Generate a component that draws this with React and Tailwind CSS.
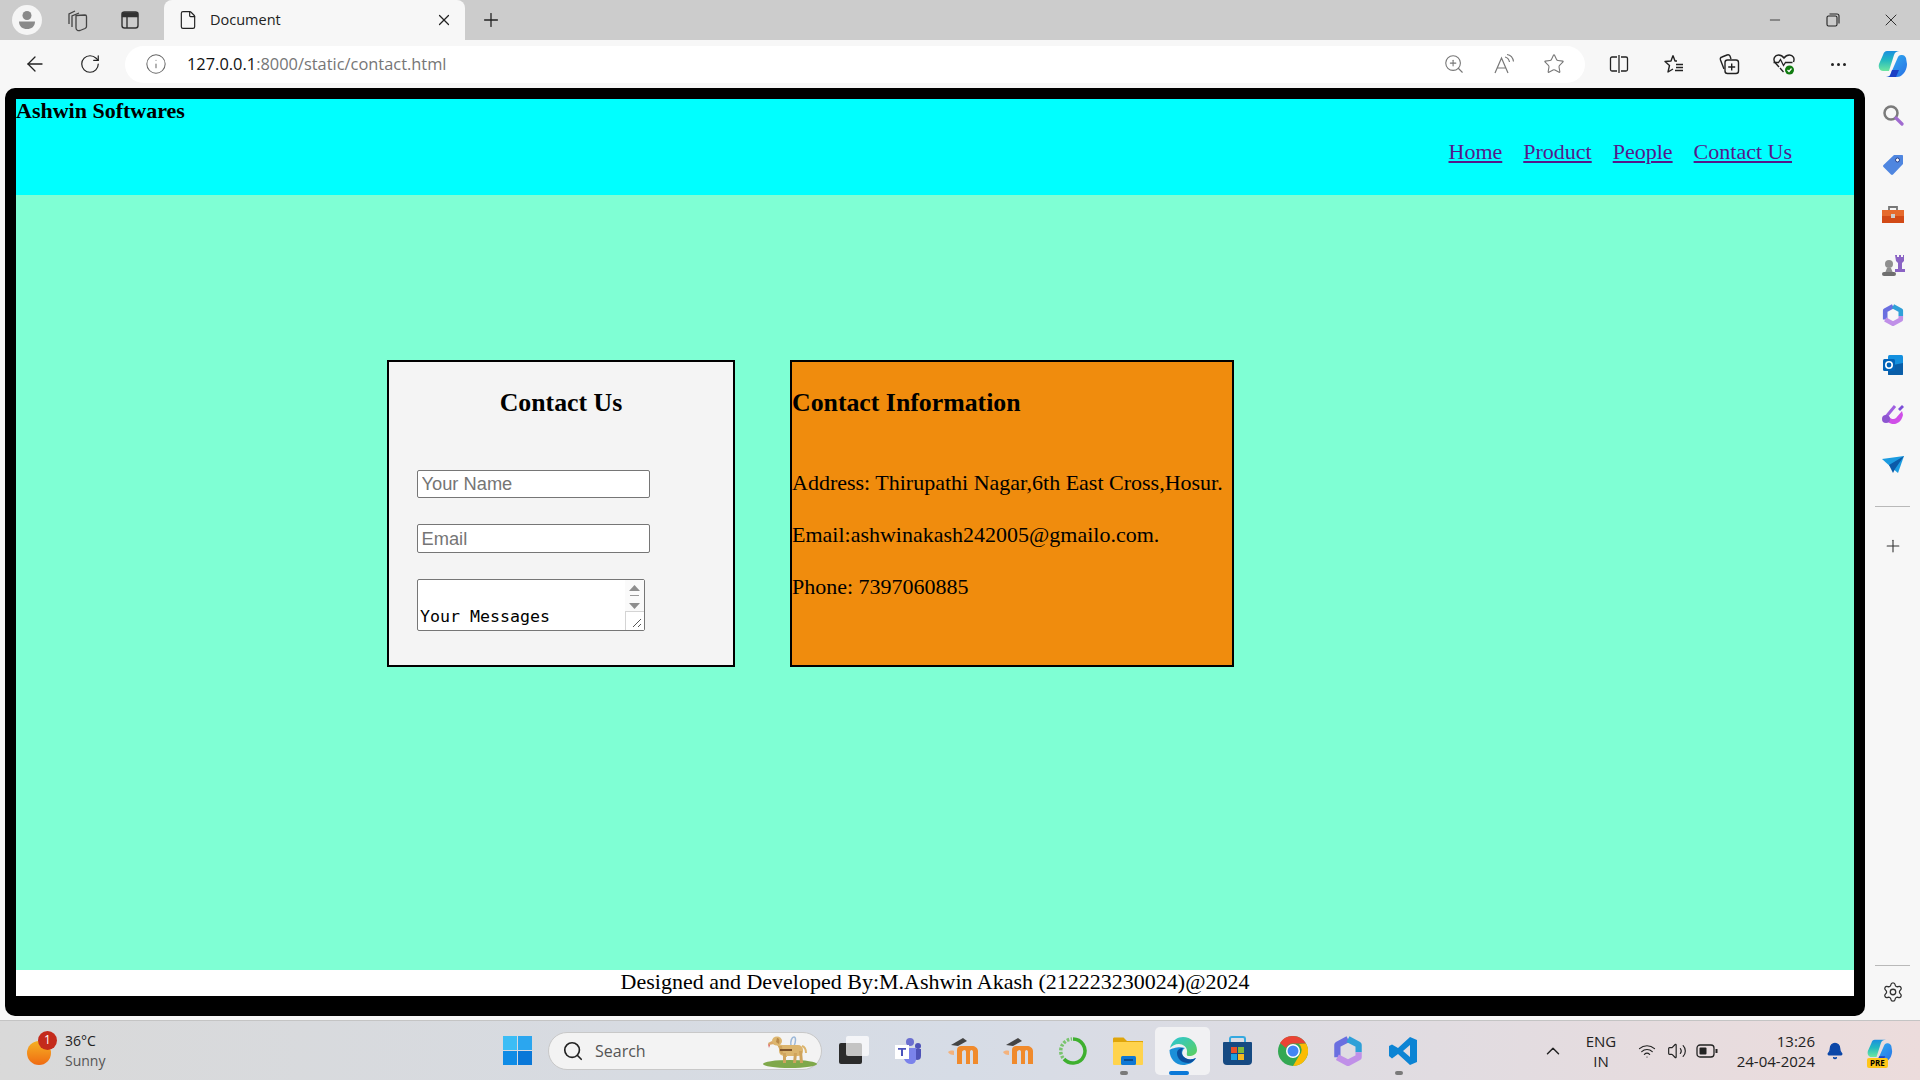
import React from 'react';
import { ArrowLeft, Bell, ChevronUp, File, Info, Minus, Plus, RotateCw, Search, Settings, Star, Volume2, Wifi, X, ZoomIn } from 'lucide-react';

const ui = "font-['Open_Sans','Noto_Sans',sans-serif]";

function Slot({ w, children }) {
  return <div className={`flex shrink-0 items-center justify-center ${w}`}>{children}</div>;
}

function Profile() {
  return (
    <svg width="30" height="30" viewBox="0 0 30 30">
      <circle cx="15" cy="15" r="15" fill="#f5f5f5" />
      <circle cx="15" cy="10.5" r="4.5" fill="#8a8a8a" />
      <path d="M7 16.5h16c0 5-3.5 7.5-8 7.5s-8-2.500-8-7.500z" fill="#8a8a8a" />
    </svg>
  );
}

function TabsIcon() {
  return (
    <svg width="22" height="24" viewBox="0 0 22 24" fill="none" stroke="#444" strokeWidth="1.3">
      <path d="M3 16V6l6-3" />
      <path d="M6 19V8l7-3" />
      <path d="M10 7.500l9-.5c1 0 1.500.5 1.500 1.500v10c0 1-.5 1.500-1.500 2l-5 2c-2 .5-4-.5-4-2.500z" />
    </svg>
  );
}

function VerticalTabs() {
  return (
    <svg width="20" height="20" viewBox="0 0 20 20" fill="none" stroke="#333" strokeWidth="1.4">
      <rect x="2" y="2" width="16" height="16" rx="2.500" />
      <path d="M2.500 3h15v3.500h-15z" fill="#333" />
      <path d="M7 6v12" />
    </svg>
  );
}

function ReadAloud() {
  return (
    <svg width="22" height="22" viewBox="0 0 22 22" fill="none" stroke="#777" strokeWidth="1.2">
      <path d="M2 20 8.500 5 15 20M4.500 15h8" />
      <path d="M12 4c2.500.5 4 2.500 4.500 5M14 1.500c3.500.5 6 3.500 6.500 7" />
    </svg>
  );
}

function SplitIcon() {
  return (
    <svg width="20" height="20" viewBox="0 0 20 20" fill="none" stroke="#222" strokeWidth="1.3">
      <path d="M8 3H3a1.500 1.500 0 0 0-1.500 1.500v11A1.500 1.500 0 0 0 3 17h5M12 3h5a1.500 1.500 0 0 1 1.500 1.500v11A1.500 1.500 0 0 1 17 17h-5M10 1v18" />
    </svg>
  );
}

function FavoritesIcon() {
  return (
    <svg width="22" height="22" viewBox="0 0 22 22" fill="none" stroke="#222" strokeWidth="1.4">
      <path d="M10 2.500 12 8h2M10 2.500 8 8l-6 .5 4.500 4L5 19l5-3" strokeLinejoin="round" />
      <path d="M13 11.500h7M13 14.500h7M12 17.500h8" />
    </svg>
  );
}

function CollectionsIcon() {
  return (
    <svg width="22" height="22" viewBox="0 0 22 22" fill="none" stroke="#222" strokeWidth="1.4">
      <path d="M6 16 2.500 7c-.5-1.500 0-2.500 1.500-3l5-2c1.500-.5 2.500 0 3 1l1 3" />
      <rect x="7" y="7" width="13.500" height="13.500" rx="2.500" />
      <path d="M13.700 10.500v7M10.200 14h7" />
    </svg>
  );
}

function HealthIcon() {
  return (
    <svg width="24" height="24" viewBox="0 0 24 24" fill="none">
      <path d="M7 15 3 10.500C.5 7 3 3 6.500 3c2 0 4 1 5.500 3 1.500-2 3.500-3 5.500-3 3.500 0 5.500 3.500 4 7" stroke="#222" strokeWidth="1.4" />
      <path d="M1.500 10.500h5l2-3 3 6 2-3h7M8 16l3.500 4" stroke="#222" strokeWidth="1.3" />
      <circle cx="17.500" cy="18" r="4.500" fill="#107c10" />
      <path d="m15.500 18 1.500 1.500 2.500-3" stroke="#fff" strokeWidth="1.2" />
    </svg>
  );
}

function Copilot({ size = 30, id = 'cp' }) {
  return (
    <svg width={size} height={size} viewBox="0 0 30 30">
      <defs>
        <linearGradient id={`${id}A`} x1="0" y1="0" x2="0" y2="1">
          <stop offset="0" stopColor="#1b8fe0" />
          <stop offset="0.45" stopColor="#22b8c0" />
          <stop offset="1" stopColor="#6ee7a0" />
        </linearGradient>
        <linearGradient id={`${id}B`} x1="0" y1="0" x2="1" y2="1">
          <stop offset="0" stopColor="#2fb4f0" />
          <stop offset="1" stopColor="#2a70e6" />
        </linearGradient>
      </defs>
      <path d="M9 2h13c-3 0-5 1-6 4l-5 16H5c-3 0-5-3-4-7L5 6c1-3 2-4 4-4z" fill={`url(#${id}A)`} />
      <path d="M20 8c1-2 3-2 4-2 2 0 3 1 4 3l1 6c0 4-2 9-5 11-1 1-3 2-5 2H8c3 0 4-1 5-4z" fill={`url(#${id}B)`} />
      <path d="M8 28c3 0 4-1 5-4l1-3h7l-3 7z" fill="#1b3fc4" />
    </svg>
  );
}

function SidebarSearch() {
  return (
    <svg width="22" height="22" viewBox="0 0 22 22" fill="none">
      <circle cx="9" cy="9" r="6.500" stroke="#7b7b7b" strokeWidth="2.500" />
      <path d="m14 14 6 6" stroke="#a06bd0" strokeWidth="3.200" strokeLinecap="round" />
    </svg>
  );
}

function SidebarTag() {
  return (
    <svg width="22" height="22" viewBox="0 0 22 22">
      <path d="M12 1h8c.6 0 1 .4 1 1v8L11 20.500c-.6.6-1.400.6-2 0L1.500 13c-.6-.6-.6-1.400 0-2z" fill="#4f86e0" />
      <circle cx="15.500" cy="6" r="2" fill="#fff" stroke="#27408b" />
    </svg>
  );
}

function SidebarToolbox() {
  return (
    <svg width="24" height="22" viewBox="0 0 24 22">
      <path d="M8 6V3h8v3" fill="none" stroke="#777" strokeWidth="1.800" />
      <rect x="1" y="6" width="22" height="6" fill="#e66a2c" />
      <rect x="1" y="12" width="22" height="7" fill="#d24a16" />
      <rect x="10" y="10" width="4" height="4" fill="#ccc" />
    </svg>
  );
}

function SidebarChess() {
  return (
    <svg width="24" height="24" viewBox="0 0 24 24">
      <path d="M14 2h2v2h2V2h2v2h2V2h1v6l-2 2v6h3v3h-10v-3h3v-6l-2-2z" fill="#8a63c4" />
      <circle cx="8" cy="11" r="4" fill="#8f8f8f" />
      <path d="M6 15h4l2 5H4z" fill="#8f8f8f" />
      <rect x="1" y="19" width="14" height="4" rx="2" fill="#6f6f6f" />
    </svg>
  );
}

function M365({ size = 22 }) {
  return (
    <svg width={size} height={size} viewBox="0 0 24 24" fill="none" strokeWidth="5" strokeLinejoin="round">
      <path d="M3.500 17V7L12 2.500" stroke="#6a6fe0" />
      <path d="M12 2.500 20.500 7v6" stroke="#2fa0d8" />
      <path d="M20.500 13v4L12 21.500 3.500 17" stroke="#c090e8" />
    </svg>
  );
}

function Outlook() {
  return (
    <svg width="22" height="22" viewBox="0 0 22 22">
      <rect x="6" y="1" width="15" height="20" rx="1.500" fill="#1490df" />
      <path d="M6 12 21 9v11c0 .6-.4 1-1 1H7c-.6 0-1-.4-1-1z" fill="#0a5ea8" />
      <rect x="1" y="5" width="12" height="12" rx="1.500" fill="#0364b8" />
      <circle cx="7" cy="11" r="3.200" fill="none" stroke="#fff" strokeWidth="1.600" />
    </svg>
  );
}

function Designer() {
  return (
    <svg width="24" height="24" viewBox="0 0 24 24">
      <path d="M4 15c2 7 15 10 18-3l-1-4-6 7c-2 2-5 1-7-1z" fill="#d04fe8" />
      <path d="M4 15 14 3" stroke="#a060e0" strokeWidth="3" />
      <circle cx="5" cy="16" r="4" fill="#8d55d0" />
      <path d="m17 6 4-4 2 2-4 4z" fill="#7c4ed8" />
    </svg>
  );
}

function PlaneIcon() {
  return (
    <svg width="22" height="18" viewBox="0 0 22 18">
      <path d="M0 3 22 0 16 17 10 12z" fill="#1b9be0" />
      <path d="M22 0 7 9l4 8 2-4z" fill="#0b5aa8" />
    </svg>
  );
}

function Weather() {
  return (
    <div className="relative h-[40px] w-[38px] shrink-0">
      <div className="absolute left-0 top-[10px] h-[24px] w-[24px] rounded-full bg-gradient-to-b from-[#f4b024] to-[#ef6a12]" />
      <div className="absolute left-[11px] top-0 flex h-[19px] w-[19px] items-center justify-center rounded-full bg-[#c42b1c] text-[12px] text-white">1</div>
    </div>
  );
}

function WinLogo() {
  return (
    <div className="grid h-[29px] w-[29px] grid-cols-2 gap-px">
      <div className="bg-[#3cbdf5]" />
      <div className="bg-[#2ba6ef]" />
      <div className="bg-[#0f8ce6]" />
      <div className="bg-[#0a78d8]" />
    </div>
  );
}

function Dog() {
  return (
    <svg width="54" height="36" viewBox="0 0 54 36">
      <ellipse cx="27" cy="31" rx="27" ry="4" fill="#7fa84a" />
      <path d="M28 13c-1-5 1-9 3-9s2 5 0 9" fill="none" stroke="#9cb8d8" strokeWidth="1.500" />
      <rect x="16" y="12" width="24" height="11" rx="5" fill="#dcb56e" />
      <ellipse cx="14" cy="8" rx="5" ry="4.500" fill="#dcb56e" />
      <path d="M9 8 5 10l1 2 5-1z" fill="#d9a868" />
      <path d="M5 11l1 4 1-3z" fill="#d8605a" />
      <path d="M14 5c2 0 3 2 2 6l-3-2z" fill="#b98a48" />
      <path d="M13 11l6 7 2 6h3v-7l2-4" fill="#dcb56e" />
      <path d="M15 13h4l1 8h-2zM36 18h3l1 12h-3zM31 20h3l-1 10h-3zM20 20h3v10h-3z" fill="#cfa35c" />
      <path d="M39 13c3 1 4 4 4 7" fill="none" stroke="#dcb56e" strokeWidth="2" />
      <path d="M17 17h12" stroke="#7d5228" strokeWidth="2" />
    </svg>
  );
}

function DeskIcon() {
  return (
    <svg width="31" height="29" viewBox="0 0 31 29">
      <rect x="0" y="7" width="23" height="21" rx="2" fill="#2b2b2b" />
      <rect x="7" y="0" width="23" height="20" rx="2" fill="#fff" fillOpacity="0.72" />
    </svg>
  );
}

function Teams() {
  return (
    <svg width="28" height="28" viewBox="0 0 28 28">
      <circle cx="16" cy="5" r="4" fill="#6b6fd0" />
      <circle cx="24" cy="9" r="3" fill="#4f53b8" />
      <path d="M20 12h7v7c0 3-2 4-4 4l-3-1z" fill="#4f53b8" />
      <path d="M9 11h13v11c0 3-2 5-5 5s-6-2-7-5z" fill="#7b83eb" />
      <rect x="1" y="8" width="14" height="14" fill="#fff" />
      <path d="M4 11h8v1.800H9V19H7v-6.200H4z" fill="#4b53bc" />
    </svg>
  );
}

function Moodle() {
  return (
    <svg width="30" height="26" viewBox="0 0 30 26">
      <path d="M9 26V12c0-3 2-4 4-4h11c3 0 6 2 6 5v13h-5V14c0-1-.5-2-1.500-2s-1.500 1-1.500 2v12h-4V14c0-1-.5-2-1.500-2S14 13 14 14v12z" fill="#f08a2c" />
      <path d="M0 14c1-1 4-2 6-1v4c-3 0-5-1-6-3z" fill="#f4b27c" />
      <path d="M3 7 15 0l4 3-9 5z" fill="#444" />
    </svg>
  );
}

function RingIcon() {
  return (
    <svg width="30" height="30" viewBox="0 0 30 30" fill="none">
      <path d="M15 3a12 12 0 1 1-9 20" stroke="#3eb02f" strokeWidth="3.500" />
      <path d="M5 22a12 12 0 0 1 9-19" stroke="#79c46e" strokeWidth="3.500" strokeDasharray="2.500 1.500" />
    </svg>
  );
}

function Folder() {
  return (
    <svg width="30" height="28" viewBox="0 0 30 28">
      <path d="M0 2c0-1 .5-1.500 1.500-1.500h9L14 4h16v8H0z" fill="#dfa50b" />
      <rect y="5" width="30" height="23" rx="1" fill="#ffd34d" />
      <rect x="8" y="19" width="15" height="9" rx="1.500" fill="#0f78d4" />
      <path d="M11 23h9" stroke="#0a3e78" strokeWidth="1.500" />
    </svg>
  );
}

function Edge() {
  return (
    <svg width="30" height="30" viewBox="0 0 30 30">
      <defs>
        <linearGradient id="edA" x1="0" y1="0" x2="1" y2="1">
          <stop offset="0" stopColor="#2cc6d8" />
          <stop offset="1" stopColor="#5cd05a" />
        </linearGradient>
      </defs>
      <path d="M1.500 14C1.500 23 8 29 15 29c5 0 10-2 13-7-4 2-9 2-12-1-3-3-2-7 1-9-5-2-13 0-15.500 2z" fill="#1b8fd8" />
      <path d="M9 17c0 6 5 10 11 10 3 0 6-2 8-5-4 2-9 2-12-1-3-3-3-6-1-9-3 0-6 2-6 5z" fill="#0b4f9e" />
      <path d="M2 12C4 4 10 1 15 1c8 0 14 6 14 13 0 4-4 6-8 6-3 0-2-2-2-5 0-4-4-7-8-7s-7 2-9 4z" fill="url(#edA)" />
    </svg>
  );
}

function Store() {
  return (
    <div className="flex h-[29px] w-[29px] flex-col">
      <div className="mx-auto h-[7px] w-[17px] rounded-t-[3px] border-x-2 border-t-2 border-[#35a9e0]" />
      <div className="flex h-[26px] w-[29px] items-center justify-center rounded-b-[4px] rounded-t-[1px] bg-[#164a82]">
        <div className="grid h-[13px] w-[13px] grid-cols-2 gap-px">
          <div className="bg-[#e8512a]" />
          <div className="bg-[#7fb93a]" />
          <div className="bg-[#1ba1e2]" />
          <div className="bg-[#f5b81f]" />
        </div>
      </div>
    </div>
  );
}

function Chrome() {
  return (
    <svg width="30" height="30" viewBox="0 0 30 30">
      <circle cx="15" cy="15" r="15" fill="#34a853" />
      <path d="M15 0a15 15 0 0 1 13 7.500H15a7.500 7.500 0 0 0-7 4.500L2 7A15 15 0 0 1 15 0z" fill="#ea4335" />
      <path d="M28 7.500A15 15 0 0 1 15 30l6.500-11A7.500 7.500 0 0 0 21 8z" fill="#fbbc04" />
      <circle cx="15" cy="15" r="7" fill="#fff" />
      <circle cx="15" cy="15" r="5.500" fill="#4285f4" />
    </svg>
  );
}

function VSCode() {
  return (
    <svg width="30" height="30" viewBox="0 0 30 30">
      <path d="M22 1 29 4v22l-7 3-12-11-6 4.500L1 20v-10l3-1.500L10 12zM22 9l-7 6 7 6z" fill="#0c84d4" fillRule="evenodd" />
    </svg>
  );
}

function Battery() {
  return (
    <svg width="22" height="14" viewBox="0 0 22 14" fill="none">
      <rect x="1" y="1" width="17" height="12" rx="3" stroke="#222" strokeWidth="1.300" />
      <rect x="3.500" y="3.500" width="7" height="7" rx="1" fill="#222" />
      <rect x="19.500" y="5" width="2" height="4" fill="#222" />
    </svg>
  );
}

export default function App() {
  return (
    <div className={`flex h-[1080px] w-[1920px] flex-col overflow-hidden bg-[#f7f7f7] ${ui}`}>
      {/* tab strip */}
      <div className="flex h-[40px] shrink-0 bg-[#cccccc]">
        <Slot w="w-[54px]"><Profile /></Slot>
        <Slot w="w-[46px]"><TabsIcon /></Slot>
        <Slot w="w-[60px]"><VerticalTabs /></Slot>
        <div className="ml-[4px] flex w-[301px] items-center rounded-t-[8px] bg-[#f7f7f7] pl-[14px] pr-[12px]">
          <File size={20} strokeWidth={1.4} color="#222" />
          <span className="ml-[12px] text-[14.5px] text-[#222]">Document</span>
          <X size={18} strokeWidth={1.6} color="#222" className="ml-auto" />
        </div>
        <div className="ml-[6px] flex w-[40px] items-center justify-center"><Plus size={22} strokeWidth={1.4} color="#222" /></div>
        <div className="ml-auto flex">
          <Slot w="w-[58px]"><Minus size={16} strokeWidth={1.2} color="#222" /></Slot>
          <Slot w="w-[58px]">
            <svg width="14" height="14" viewBox="0 0 14 14" fill="none" stroke="#222" strokeWidth="1.100">
              <rect x="1" y="3" width="10" height="10" rx="1.500" />
              <path d="M3.500 1H11c1.200 0 2 .8 2 2v7.500" />
            </svg>
          </Slot>
          <Slot w="w-[58px]"><X size={20} strokeWidth={1.1} color="#222" /></Slot>
        </div>
      </div>

      {/* toolbar */}
      <div className="flex h-[48px] shrink-0 items-center">
        <div className="ml-[13px] flex w-[44px] justify-center"><ArrowLeft size={24} strokeWidth={1.3} color="#222" /></div>
        <div className="flex w-[66px] justify-center"><RotateCw size={22} strokeWidth={1.3} color="#222" /></div>
        <div className="ml-[2px] flex h-[37px] w-[1460px] items-center rounded-full bg-white pl-[20px] pr-[6px]">
          <Info size={22} strokeWidth={1.1} color="#666" />
          <div className="ml-[20px] text-[16.4px] text-[#767676]"><span className="text-[#111]">127.0.0.1</span>:8000/static/contact.html</div>
          <div className="ml-auto flex">
            <Slot w="w-[50px]"><ZoomIn size={22} strokeWidth={1.2} color="#777" /></Slot>
            <Slot w="w-[50px]"><ReadAloud /></Slot>
            <Slot w="w-[50px]"><Star size={22} strokeWidth={1.2} color="#777" /></Slot>
          </div>
        </div>
        <div className="ml-[6px] flex">
          <Slot w="w-[55px]"><SplitIcon /></Slot>
          <Slot w="w-[55px]"><FavoritesIcon /></Slot>
          <Slot w="w-[55px]"><CollectionsIcon /></Slot>
          <Slot w="w-[55px]"><HealthIcon /></Slot>
          <Slot w="w-[55px]">
            <div className="flex gap-[3px]">
              <div className="h-[3px] w-[3px] rounded-full bg-[#222]" />
              <div className="h-[3px] w-[3px] rounded-full bg-[#222]" />
              <div className="h-[3px] w-[3px] rounded-full bg-[#222]" />
            </div>
          </Slot>
          <Slot w="w-[54px]"><Copilot /></Slot>
        </div>
      </div>

      <div className="flex min-h-0 flex-1">
        {/* page */}
        <div className="mb-[4px] ml-[5px] flex w-[1860px] flex-col rounded-[10px] bg-black pb-[20px] pl-[11px] pr-[11px] pt-[11px] font-['Liberation_Serif',serif] text-black">
          <div className="relative flex h-[96px] shrink-0 items-center justify-end gap-[21px] bg-[#00ffff] pr-[62px] pt-[9px] text-[22px] text-[#551a8b]">
            <div className="absolute left-0 top-[-1px] text-[22px] font-bold leading-[26px] text-black">Ashwin Softwares</div>
            <a href="#" className="underline">Home</a>
            <a href="#" className="underline">Product</a>
            <a href="#" className="underline">People</a>
            <a href="#" className="underline">Contact Us</a>
          </div>

          <div className="flex flex-1 items-start gap-[55px] bg-[#7fffd4] pl-[371px] pt-[165px]">
            <div className="h-[307px] w-[348px] border-2 border-black bg-[#f4f4f4] px-[28px] pt-[26px]">
              <h2 className="text-center text-[25.8px] font-bold leading-[30px]">Contact Us</h2>
              <input placeholder="Your Name" className="mt-[52px] block h-[28px] w-[233px] rounded-[2px] border border-[#767676] bg-white px-[3.5px] font-['Liberation_Sans',sans-serif] text-[18.3px] placeholder:text-[#757575]" />
              <input placeholder="Email" className="mt-[26px] block h-[29px] w-[233px] rounded-[2px] border border-[#767676] bg-white px-[3.5px] font-['Liberation_Sans',sans-serif] text-[18.3px] placeholder:text-[#757575]" />
              <div className="relative mt-[26px] h-[52px] w-[228px]">
                <textarea defaultValue={'\nYour Messages'} className="block h-[52px] w-[228px] resize-none overflow-hidden rounded-[2px] border border-[#767676] bg-white px-[2px] py-[2px] font-['DejaVu_Sans_Mono',monospace] text-[16.6px] leading-[23px]" />
                <div className="absolute right-[1px] top-[1px] flex h-[50px] w-[19px] flex-col items-center bg-[#fafafa]">
                  <svg width="11" height="28" viewBox="0 0 11 28" className="mt-[5px]">
                    <path d="M5.500 0 11 6H0z" fill="#8e8e8e" />
                    <path d="M1 10.500h9" stroke="#9a9a9a" />
                    <path d="M0 18h11l-5.500 6z" fill="#8e8e8e" />
                  </svg>
                  <div className="absolute bottom-0 right-0 h-[19px] w-[19px] border-l border-t border-[#d4d4d4] bg-white">
                    <svg width="17" height="17" viewBox="0 0 17 17" stroke="#555">
                      <path d="M7 15 15 7M12 15l3-3" />
                    </svg>
                  </div>
                </div>
              </div>
            </div>

            <div className="h-[307px] w-[444px] border-2 border-black bg-[#f08c0d] pt-[26px] text-[22px] leading-[26px]">
              <h2 className="text-[25.8px] font-bold leading-[30px]">Contact Information</h2>
              <p className="mt-[52px]">Address: Thirupathi Nagar,6th East Cross,Hosur.</p>
              <p className="mt-[26px]">Email:ashwinakash242005@gmailo.com.</p>
              <p className="mt-[26px]">Phone: 7397060885</p>
            </div>
          </div>

          <div className="h-[26px] shrink-0 bg-white text-center text-[22px] leading-[23px]">Designed and Developed By:M.Ashwin Akash (212223230024)@2024</div>
        </div>

        {/* edge sidebar */}
        <div className="flex w-[55px] flex-col items-center pt-[2px]">
          <div className="flex h-[50px] items-center"><SidebarSearch /></div>
          <div className="flex h-[50px] items-center"><SidebarTag /></div>
          <div className="flex h-[50px] items-center"><SidebarToolbox /></div>
          <div className="flex h-[50px] items-center"><SidebarChess /></div>
          <div className="flex h-[50px] items-center"><M365 /></div>
          <div className="flex h-[50px] items-center"><Outlook /></div>
          <div className="flex h-[50px] items-center"><Designer /></div>
          <div className="flex h-[50px] items-center"><PlaneIcon /></div>
          <div className="mt-[16px] h-px w-[35px] bg-[#b9b9b9]" />
          <div className="mt-[14px] flex h-[50px] items-center"><Plus size={20} strokeWidth={1.3} color="#333" /></div>
          <div className="mt-auto h-px w-[35px] bg-[#b9b9b9]" />
          <div className="mb-[3px] mt-[1px] flex h-[50px] items-center"><Settings size={22} strokeWidth={1.4} color="#333" /></div>
        </div>
      </div>

      {/* taskbar */}
      <div className="flex h-[60px] shrink-0 items-center border-t border-[#c4c4c4] bg-gradient-to-r from-[#d9d9d9] via-[#d6dce6] to-[#ecdcdc]">
        <div className="ml-[27px] flex w-[476px] items-center">
          <Weather />
          <div className="text-[14px] leading-[20px]">
            <div className="text-[#222]">36°C</div>
            <div className="text-[#555]">Sunny</div>
          </div>
        </div>
        <WinLogo />
        <div className="ml-[16px] flex h-[38px] w-[274px] items-center rounded-full border border-[#c8c8c8] bg-[#f3f3f3] pl-[13px]">
          <Search size={22} strokeWidth={1.8} color="#222" />
          <span className="ml-[11px] text-[16px] text-[#555]">Search</span>
          <div className="ml-auto mr-[4px]"><Dog /></div>
        </div>
        <div className="ml-[9px]"><Slot w="w-[46px]"><DeskIcon /></Slot></div>
        <div className="ml-[3px] flex">
          <Slot w="w-[55px]"><Teams /></Slot>
          <Slot w="w-[55px]"><Moodle /></Slot>
          <Slot w="w-[55px]"><Moodle /></Slot>
          <Slot w="w-[55px]"><RingIcon /></Slot>
          <div className="relative flex h-[48px] w-[55px] items-center justify-center">
            <Folder />
            <div className="absolute bottom-0 left-[20px] h-[4px] w-[8px] rounded-full bg-[#7a7a7a]" />
          </div>
          <div className="relative flex h-[48px] w-[55px] items-center justify-center rounded-[5px] bg-[#f1f1f3]">
            <Edge />
            <div className="absolute bottom-0 left-[14px] h-[4px] w-[20px] rounded-full bg-[#0a78d8]" />
          </div>
          <Slot w="w-[55px]"><Store /></Slot>
          <Slot w="w-[55px]"><Chrome /></Slot>
          <Slot w="w-[55px]"><M365 size={30} /></Slot>
          <div className="relative flex h-[48px] w-[55px] items-center justify-center">
            <VSCode />
            <div className="absolute bottom-0 left-[20px] h-[4px] w-[8px] rounded-full bg-[#7a7a7a]" />
          </div>
        </div>
        <div className="ml-[103px] flex items-center">
          <Slot w="w-[40px]"><ChevronUp size={22} strokeWidth={1.6} color="#222" /></Slot>
          <div className="w-[56px] text-center text-[15px] leading-[20px] text-[#222]">
            <div>ENG</div>
            <div>IN</div>
          </div>
          <Slot w="w-[36px]"><Wifi size={18} strokeWidth={1.6} color="#222" /></Slot>
          <Slot w="w-[24px]"><Volume2 size={20} strokeWidth={1.4} color="#222" /></Slot>
          <Slot w="w-[36px]"><Battery /></Slot>
          <div className="w-[90px] text-right text-[15px] leading-[20px] text-[#222]">
            <div>13:26</div>
            <div>24-04-2024</div>
          </div>
          <Slot w="w-[40px]"><Bell size={18} fill="#0b47a8" color="#0b47a8" /></Slot>
          <div className="relative flex h-[34px] w-[50px] items-center justify-center">
            <Copilot size={26} id="cpt" />
            <div className="absolute bottom-0 left-[12px] rounded-[2px] bg-[#ffc61a] px-[3px] text-[8px] font-bold leading-[10px] text-black">PRE</div>
          </div>
        </div>
      </div>
    </div>
  );
}
